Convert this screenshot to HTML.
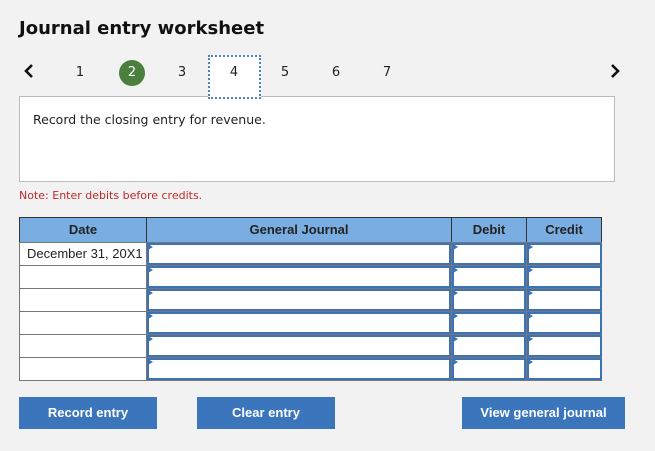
<!DOCTYPE html>
<html><head><style>
body{margin:0;width:655px;height:451px;background:#f2f2f2;font-family:"DejaVu Sans",Verdana,sans-serif;position:relative;overflow:hidden}
.a{position:absolute}
.n{position:absolute;top:65px;font-size:13px;width:20px;text-align:center;color:#222;z-index:3}
.c{position:absolute;box-sizing:border-box;border:1px solid #777;background:#fff}
.h{background:#7aaee3;border:1px solid #333;font-family:"Liberation Sans",Arial,sans-serif;font-weight:bold;font-size:13px;color:#222;text-align:center;line-height:23px}
.i{position:absolute;box-sizing:border-box;border:2px solid #3d72b4;background:#fff}
.i:before{content:"";position:absolute;left:-1px;top:-1px;border-left:5px solid #3d72b4;border-top:3px solid transparent;border-bottom:3px solid transparent}
.b{position:absolute;top:397px;height:32px;background:#3b76bd;color:#fff;font-family:"Liberation Sans",Arial,sans-serif;font-weight:bold;font-size:13px;text-align:center;line-height:32px}
</style></head><body>
<div class="a" style="left:19px;top:18px;font-size:18px;font-weight:bold;color:#111">Journal entry worksheet</div>
<svg class="a" style="left:22px;top:63px" width="14" height="16"><path d="M10 2 L4 8 L10 14" stroke="#111" stroke-width="2.6" fill="none"/></svg>
<svg class="a" style="left:608px;top:63px" width="14" height="16"><path d="M4 2 L10 8 L4 14" stroke="#111" stroke-width="2.6" fill="none"/></svg>
<div class="n" style="left:70px">1</div>
<div class="a" style="left:119px;top:60px;width:26px;height:26px;border-radius:50%;background:#4a7f3d;color:#fff;font-size:13px;text-align:center;line-height:26px">2</div>
<div class="n" style="left:172px">3</div>
<div class="a" style="left:19px;top:96px;width:596px;height:86px;box-sizing:border-box;border:1px solid #bbb;background:#fff"></div>
<div class="a" style="left:208px;top:55px;width:53px;height:44px;box-sizing:border-box;border:2px dotted #4f80c0;background:#fff;z-index:2"></div>
<div class="n" style="left:224px">4</div>
<div class="n" style="left:275px">5</div>
<div class="n" style="left:326px">6</div>
<div class="n" style="left:377px">7</div>
<div class="a" style="left:33px;top:112px;font-size:12.5px;color:#222">Record the closing entry for revenue.</div>
<div class="a" style="left:19px;top:189px;font-size:11px;color:#c0282a">Note: Enter debits before credits.</div>

<div class="c h" style="left:19px;top:217px;width:128px;height:26px">Date</div>
<div class="c h" style="left:146px;top:217px;width:306px;height:26px">General Journal</div>
<div class="c h" style="left:451px;top:217px;width:76px;height:26px">Debit</div>
<div class="c h" style="left:526px;top:217px;width:76px;height:26px">Credit</div>

<div class="c" style="left:19px;top:242px;width:128px;height:24px;font-family:'Liberation Sans',Arial,sans-serif;font-size:13px;color:#222;line-height:22px;padding-left:7px">December 31, 20X1</div>
<div class="c" style="left:19px;top:265px;width:128px;height:24px"></div>
<div class="c" style="left:19px;top:288px;width:128px;height:24px"></div>
<div class="c" style="left:19px;top:311px;width:128px;height:24px"></div>
<div class="c" style="left:19px;top:334px;width:128px;height:24px"></div>
<div class="c" style="left:19px;top:357px;width:128px;height:24px"></div>
<div class="a" style="left:146px;top:242px;width:456px;height:139px;background:#777"></div>

<div class="i" style="left:147px;top:243px;width:304px;height:22px"></div>
<div class="i" style="left:452px;top:243px;width:74px;height:22px"></div>
<div class="i" style="left:527px;top:243px;width:75px;height:22px"></div>
<div class="i" style="left:147px;top:266px;width:304px;height:22px"></div>
<div class="i" style="left:452px;top:266px;width:74px;height:22px"></div>
<div class="i" style="left:527px;top:266px;width:75px;height:22px"></div>
<div class="i" style="left:147px;top:289px;width:304px;height:22px"></div>
<div class="i" style="left:452px;top:289px;width:74px;height:22px"></div>
<div class="i" style="left:527px;top:289px;width:75px;height:22px"></div>
<div class="i" style="left:147px;top:312px;width:304px;height:22px"></div>
<div class="i" style="left:452px;top:312px;width:74px;height:22px"></div>
<div class="i" style="left:527px;top:312px;width:75px;height:22px"></div>
<div class="i" style="left:147px;top:335px;width:304px;height:22px"></div>
<div class="i" style="left:452px;top:335px;width:74px;height:22px"></div>
<div class="i" style="left:527px;top:335px;width:75px;height:22px"></div>
<div class="i" style="left:147px;top:358px;width:304px;height:22px"></div>
<div class="i" style="left:452px;top:358px;width:74px;height:22px"></div>
<div class="i" style="left:527px;top:358px;width:75px;height:22px"></div>

<div class="b" style="left:19px;width:138px">Record entry</div>
<div class="b" style="left:197px;width:138px">Clear entry</div>
<div class="b" style="left:462px;width:163px">View general journal</div>
</body></html>
